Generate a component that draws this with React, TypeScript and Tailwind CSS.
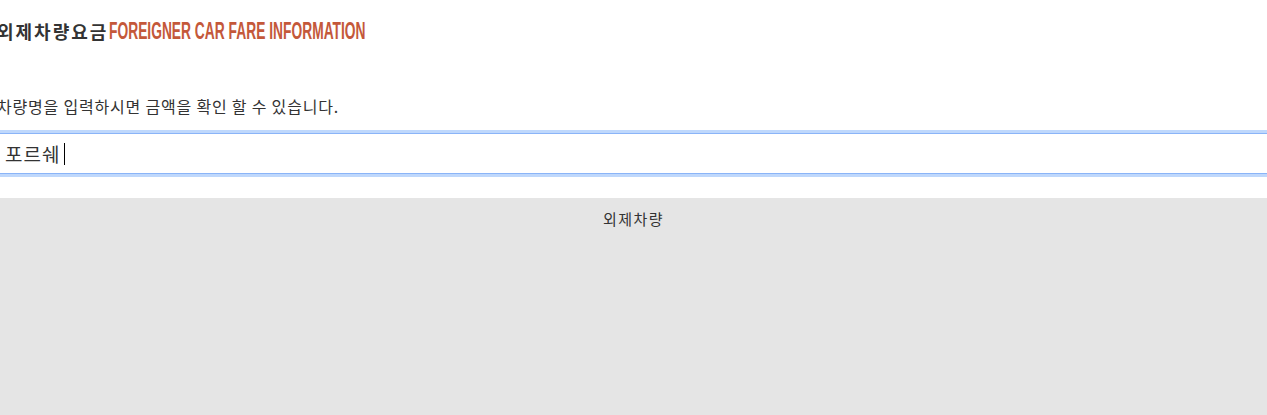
export default function App() {
    return (
        <div className="w-full min-h-[415px] bg-white font-['Noto_Sans_CJK_KR',sans-serif] text-[#333] overflow-hidden">
            {/* 상단 타이틀 */}
            <div className="-ml-[3px] -mr-[6px]">
                <h2 className="pt-[18px] h-[44px] flex items-center leading-[26px] whitespace-nowrap">
                    <span className="text-[18px] tracking-[2px] font-bold text-[#333]">외제차량요금</span>
                    <span className="inline-block ml-[1px] origin-left scale-x-[0.6] font-['Liberation_Sans',Arial,sans-serif] text-[23px] font-bold text-[#c4583a]">
                        FOREIGNER CAR FARE INFORMATION
                    </span>
                </h2>

                <p className="mt-[52px] text-[16px] tracking-[0.8px] leading-[20px] text-[#333] whitespace-nowrap">
                    차량명을 입력하시면 금액을 확인 할 수 있습니다.
                </p>

                {/* 검색 입력 */}
                <div className="mt-[17px] h-[41px] border border-[#8ab4f8] shadow-[0_0_0_3px_#bfd8fc] bg-white flex items-center pl-[7px]">
                    <span className="text-[19px] tracking-[1px] leading-[24px] text-[#333]">포르쉐</span>
                    <span className="ml-[4px] w-px h-[22px] bg-black"></span>
                </div>
            </div>

            {/* 결과 영역 */}
            <div className="mt-[24px] h-[217px] bg-[#e5e5e5] pt-[10px] text-center">
                <p className="text-[15px] tracking-[1.5px] leading-[22px] text-[#333]">외제차량</p>
            </div>
        </div>
    );
}
